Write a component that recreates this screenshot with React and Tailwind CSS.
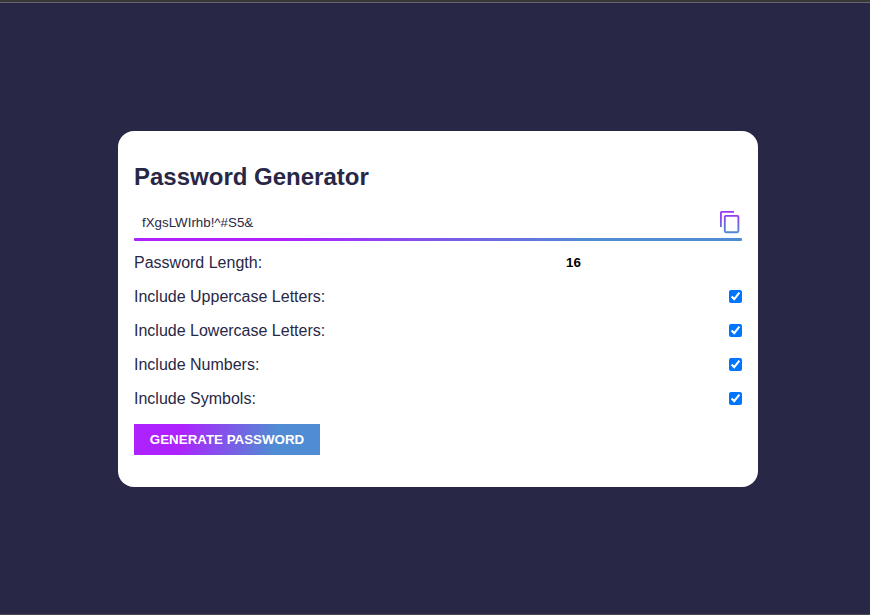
import React from 'react';

const options = [
  'Include Uppercase Letters:',
  'Include Lowercase Letters:',
  'Include Numbers:',
  'Include Symbols:',
];

function CopyIcon() {
  return (
    <svg className="block h-6 w-6" viewBox="0 0 24 24" fill="none">
      <defs>
        <linearGradient id="copyFill" gradientUnits="userSpaceOnUse" x1="12" y1="0" x2="12" y2="22">
          <stop offset="0" stopColor="#9b35f5" />
          <stop offset="0.25" stopColor="#9040f2" />
          <stop offset="1" stopColor="#508cd3" />
        </linearGradient>
      </defs>
      <path
        d="M2.9 16V2q0-1.1 1.1-1.1H16M7.9 4.9H19.3q1.1 0 1.1 1.1V20.1q0 1.1-1.1 1.1H7.9q-1.1 0-1.1-1.1V6q0-1.1 1.1-1.1Z"
        stroke="url(#copyFill)"
        strokeWidth="1.85"
      />
    </svg>
  );
}

function Check() {
  return (
    <input type="checkbox" defaultChecked className="mb-px h-[13px] w-[13px] shrink-0 accent-[#0075ff]" />
  );
}

export default function App() {
  return (
    <div className="flex h-[615px] w-[870px] flex-col overflow-hidden bg-[#282846] font-['Liberation_Sans',Arial,sans-serif] text-[#282846]">
      <div className="h-[3px] shrink-0 border-b border-[#66676b] bg-[#37373a]" />
      <main className="flex flex-1 items-start pl-[118px] pt-32">
        <section className="h-[356px] w-[640px] rounded-2xl bg-white px-4 pt-8">
          <h2 className="text-2xl leading-7 font-bold">Password Generator</h2>
          <div className="mt-4 flex h-8 items-center justify-between pl-2">
            <span className="text-[13.333px] leading-4">fXgsLWIrhb!^#S5&amp;</span>
            <CopyIcon />
          </div>
          <div className="-mt-px h-[3px] rounded-[1px] bg-[linear-gradient(90deg,#ae22ff_25%,#508cd3_75%)]" />
          <div className="mt-[13px] flex h-[18px] items-center">
            <span className="w-[432px]">Password Length:</span>
            <span className="text-[13.333px] font-bold text-black">16</span>
          </div>
          {options.map((label) => (
            <label key={label} className="mt-4 flex h-[18px] items-center justify-between">
              <span>{label}</span>
              <Check />
            </label>
          ))}
          <button className="mt-4 flex h-[31px] w-[186px] items-center justify-center bg-[linear-gradient(100deg,#ae22ff_25%,#508cd3_75%)] text-[13.333px] font-bold text-white">
            GENERATE PASSWORD
          </button>
        </section>
      </main>
      <div className="h-px shrink-0 bg-[#48484c]" />
    </div>
  );
}
